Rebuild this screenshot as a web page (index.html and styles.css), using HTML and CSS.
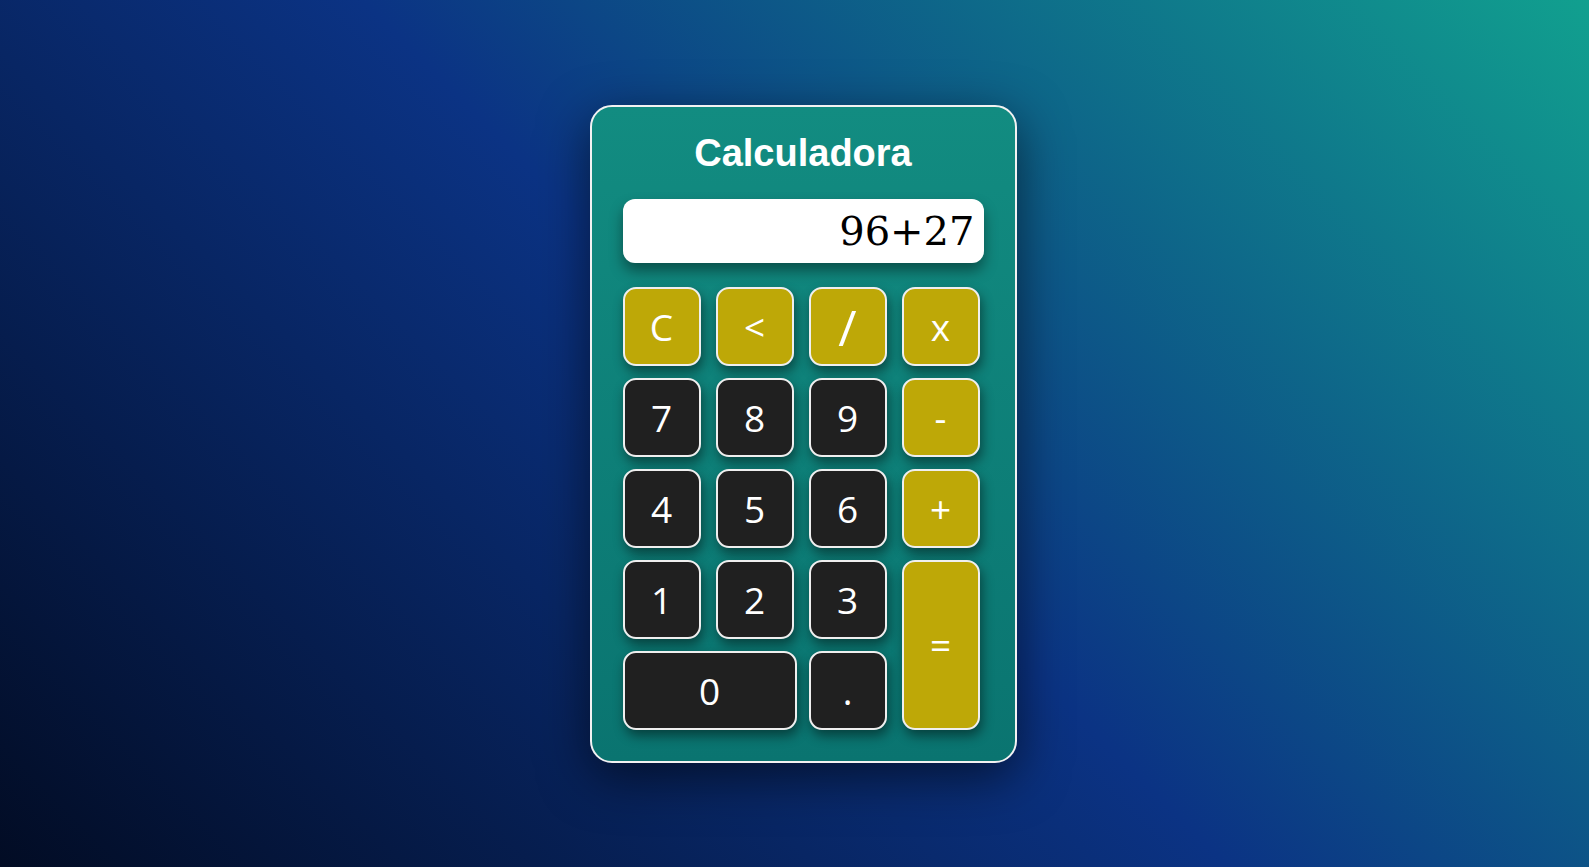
FILE: index.html
```html
<!DOCTYPE html>
<html lang="es">
<head>
<meta charset="utf-8">
<title>Calculadora</title>
<link rel="stylesheet" href="styles.css">
</head>
<body>
<main class="page">
  <section class="calculator">
    <h1 class="title">Calculadora</h1>
    <div class="display">96+27</div>
    <div class="keys">
      <button class="key op">C</button>
      <button class="key op">&lt;</button>
      <button class="key op"><span class="slash">/</span></button>
      <button class="key op">x</button>
      <button class="key">7</button>
      <button class="key">8</button>
      <button class="key">9</button>
      <button class="key op">-</button>
      <button class="key">4</button>
      <button class="key">5</button>
      <button class="key">6</button>
      <button class="key op">+</button>
      <button class="key">1</button>
      <button class="key">2</button>
      <button class="key">3</button>
      <button class="key op equals">=</button>
      <button class="key zero">0</button>
      <button class="key">.</button>
    </div>
  </section>
</main>
</body>
</html>
```

FILE: styles.css
```css
* { box-sizing: border-box; }

html, body {
  margin: 0;
  height: 100%;
}

body {
  background: linear-gradient(45deg, #020c24 0%, #0b3384 50%, #11a08f 100%);
  font-family: "Open Sans", "Noto Sans", sans-serif;
  overflow: hidden;
}

.page {
  min-height: 100vh;
  display: flex;
  align-items: center;
  justify-content: center;
  padding-left: 17px;
}

.calculator {
  width: 427px;
  padding: 25px 31px 31px;
  border: 2px solid #f2f2f2;
  border-radius: 22px;
  background: linear-gradient(180deg, #128c81 0%, #0a7470 100%);
  box-shadow: 0 14px 50px rgba(0, 0, 0, 0.55);
}

.title {
  margin: 0 0 25px;
  text-align: center;
  color: #ffffff;
  font-family: "Liberation Sans", Arial, sans-serif;
  font-weight: 700;
  font-size: 38px;
  line-height: 42px;
}

.display {
  height: 64px;
  margin-bottom: 24px;
  padding: 0 9px;
  display: flex;
  align-items: center;
  justify-content: flex-end;
  background: #ffffff;
  border-radius: 12px;
  color: #000000;
  font-family: "DejaVu Serif", serif;
  font-size: 40px;
  box-shadow: 0 8px 14px rgba(0, 0, 0, 0.4);
}

.keys {
  display: grid;
  grid-template-columns: repeat(4, 78px);
  grid-auto-rows: 79px;
  column-gap: 15px;
  row-gap: 12px;
}

.key {
  margin: 0;
  padding: 0;
  border: 2px solid #efefef;
  border-radius: 13px;
  background: #202020;
  color: #ffffff;
  font-family: "Open Sans", "Noto Sans", sans-serif;
  font-size: 37px;
  line-height: 1;
  display: flex;
  align-items: center;
  justify-content: center;
  box-shadow: 2px 6px 12px rgba(0, 0, 0, 0.45);
}

.op {
  background: #bea807;
}

.slash {
  font-size: 50px;
  transform: translateY(1px);
}

.equals {
  grid-column: 4;
  grid-row: 4 / span 2;
}

.zero {
  grid-column: 1 / span 2;
  width: calc(100% + 3px);
}
```
